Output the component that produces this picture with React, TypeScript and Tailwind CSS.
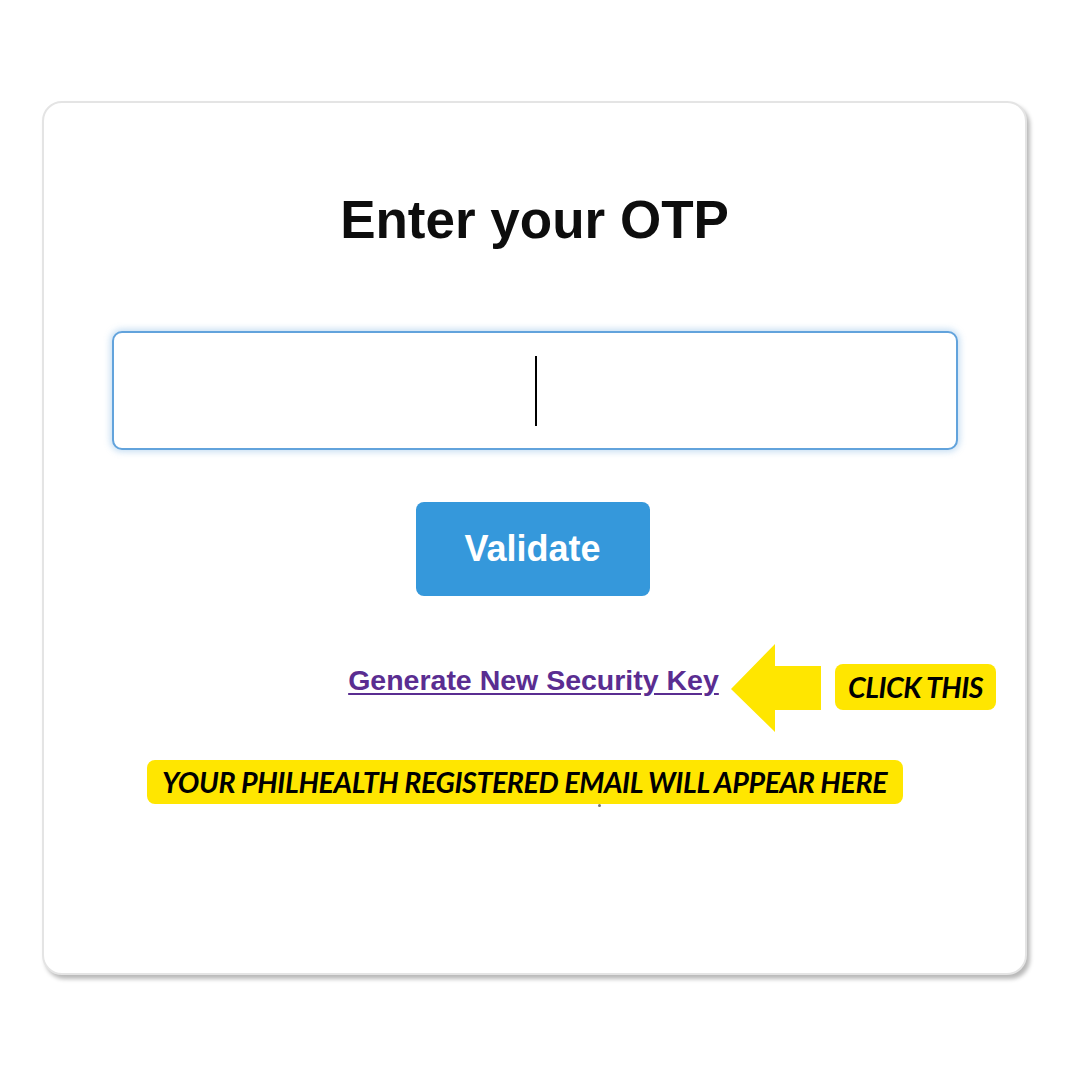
export default function App() {
  return (
    <div className="min-h-[1080px] w-[1080px] bg-white pl-[42px] pt-[101px] font-['Liberation_Sans',Arial,sans-serif]">
      <div className="relative flex h-[874px] w-[985px] flex-col items-center rounded-[20px] border-2 border-[#e4e4e4] bg-white shadow-[3px_4px_4px_rgba(0,0,0,0.28)]">
        <h1 className="mt-[87px] text-[53px] font-bold leading-[60px] text-[#0d0d0d]">Enter your OTP</h1>

        <div className="mt-[81px] flex h-[119px] w-[846px] items-center justify-center rounded-[10px] border-2 border-[#62a3dc] bg-white shadow-[0_0_6px_2px_rgba(98,163,220,0.35)]">
          <div className="ml-[2px] h-[70px] w-[2px] bg-black" />
        </div>

        <button className="mr-[4px] mt-[52px] h-[94px] w-[234px] rounded-[8px] bg-[#3598db] text-[36px] font-bold text-white">
          Validate
        </button>

        <div className="relative mr-[2px] mt-[68px] flex h-[32px] items-center">
          <a href="#" className="text-[28.5px] font-bold leading-[32px] text-[#5a2d91] underline underline-offset-[3px]">
            Generate New Security Key
          </a>
        </div>

        {/* annotation arrow + label */}
        <svg className="absolute left-[687px] top-[541px]" width="92" height="88" viewBox="0 0 92 88">
          <polygon points="0,45 44,0 44,22 90,22 90,66 44,66 44,88" fill="#ffe600" />
        </svg>
        <div className="absolute left-[791px] top-[561px] flex h-[46px] w-[161px] items-center justify-center rounded-[8px] bg-[#ffe600]">
          <span className="font-['Lato',sans-serif] text-[28.5px] font-bold italic tracking-[-0.5px] text-black">CLICK THIS</span>
        </div>

        <div className="ml-[-20px] mt-[64px] flex h-[44px] w-[756px] items-center justify-center rounded-[8px] bg-[#ffe600]">
          <span className="font-['Lato',sans-serif] text-[28.6px] font-bold italic tracking-[-0.4px] text-black">
            YOUR PHILHEALTH REGISTERED EMAIL WILL APPEAR HERE
          </span>
        </div>
        <div className="ml-[130px] h-[3px] w-[3px] rounded-full bg-[#777]" />
      </div>
    </div>
  );
}
